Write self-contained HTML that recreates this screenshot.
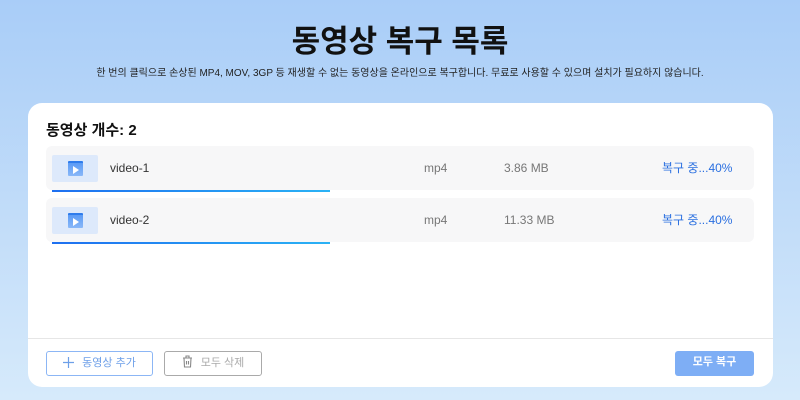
<!DOCTYPE html>
<html><head><meta charset="utf-8"><style>
*{margin:0;padding:0;box-sizing:border-box}
body{width:800px;height:400px;overflow:hidden;font-family:"Liberation Sans","Noto Sans CJK KR",sans-serif;background:linear-gradient(180deg,#a9cdf8 0%,#c4def9 60%,#d6eafb 100%);position:relative}
h1{position:absolute;top:22px;width:100%;text-align:center;font-size:31px;font-weight:700;color:#111;line-height:40px}
.sub{position:absolute;top:67px;width:100%;text-align:center;font-size:10px;color:#222;line-height:14px}
.card{position:absolute;left:28px;top:103px;width:745px;height:284px;background:#fff;border-radius:14px}
.cnt{position:absolute;left:18px;top:18px;font-size:15px;font-weight:700;color:#111;line-height:20px}
.row{position:absolute;left:18px;width:708px;height:44px;background:#f7f7f8;border-radius:6px}
.ic{position:absolute;left:6px;top:9px;width:46px;height:27px;background:#dde9fb;border-radius:2px}
.ic i{position:absolute;left:16px;top:6px;width:15px;height:15px;background:linear-gradient(#5b9bf5,#8ab8f8);border-top:2px solid #2f7cec;border-radius:1px}
.ic i:after{content:"";position:absolute;left:5px;top:3px;border-left:6px solid #fff;border-top:4px solid transparent;border-bottom:4px solid transparent}
.row span{position:absolute;top:14px;font-size:12px;line-height:16px;color:#555}
.bar{position:absolute;left:6px;bottom:-2px;width:278px;height:2px;background:linear-gradient(90deg,#1e6ff0,#2ab2f5)}
.foot{position:absolute;left:0;top:235px;width:100%;border-top:1px solid #e6e6e6}
.btn{position:absolute;top:248px;height:25px;border-radius:3px;font-size:11px;text-align:center;line-height:23px}
.btn svg{vertical-align:-2px;margin-right:8px}
</style></head><body>
<h1>동영상 복구 목록</h1>
<div class="sub">한 번의 클릭으로 손상된 MP4, MOV, 3GP 등 재생할 수 없는 동영상을 온라인으로 복구합니다. 무료로 사용할 수 있으며 설치가 필요하지 않습니다.</div>
<div class="card">
<div class="cnt">동영상 개수: 2</div>
<div class="row" style="top:43px"><div class="ic"><i></i></div><span style="left:64px;color:#333">video-1</span><span style="left:378px;color:#777">mp4</span><span style="left:458px;color:#777">3.86 MB</span><span style="left:616px;color:#2a6fe0">복구 중...40%</span><div class="bar"></div></div>
<div class="row" style="top:95px"><div class="ic"><i></i></div><span style="left:64px;color:#333">video-2</span><span style="left:378px;color:#777">mp4</span><span style="left:458px;color:#777">11.33 MB</span><span style="left:616px;color:#2a6fe0">복구 중...40%</span><div class="bar"></div></div>
<div class="foot"></div>
<div class="btn" style="left:18px;width:107px;border:1px solid #8cb6f5;color:#6d9fe8"><svg width="11" height="11" viewBox="0 0 11 11"><path d="M5.5 0V11M0 5.5H11" stroke="#6d9fe8" stroke-width="1.2"/></svg>동영상 추가</div>
<div class="btn" style="left:136px;width:98px;border:1px solid #aaa;color:#aaa"><svg width="11" height="13" viewBox="0 0 11 13"><path d="M1 3H10M4 3V1H7V3M2 3L2.5 12H8.5L9 3M4.5 6V9.5M6.5 6V9.5" stroke="#888" stroke-width="1.1" fill="none"/></svg>모두 삭제</div>
<div class="btn" style="left:647px;width:79px;background:#7eaef5;color:#fff;font-weight:700">모두 복구</div>
</div>
</body></html>
